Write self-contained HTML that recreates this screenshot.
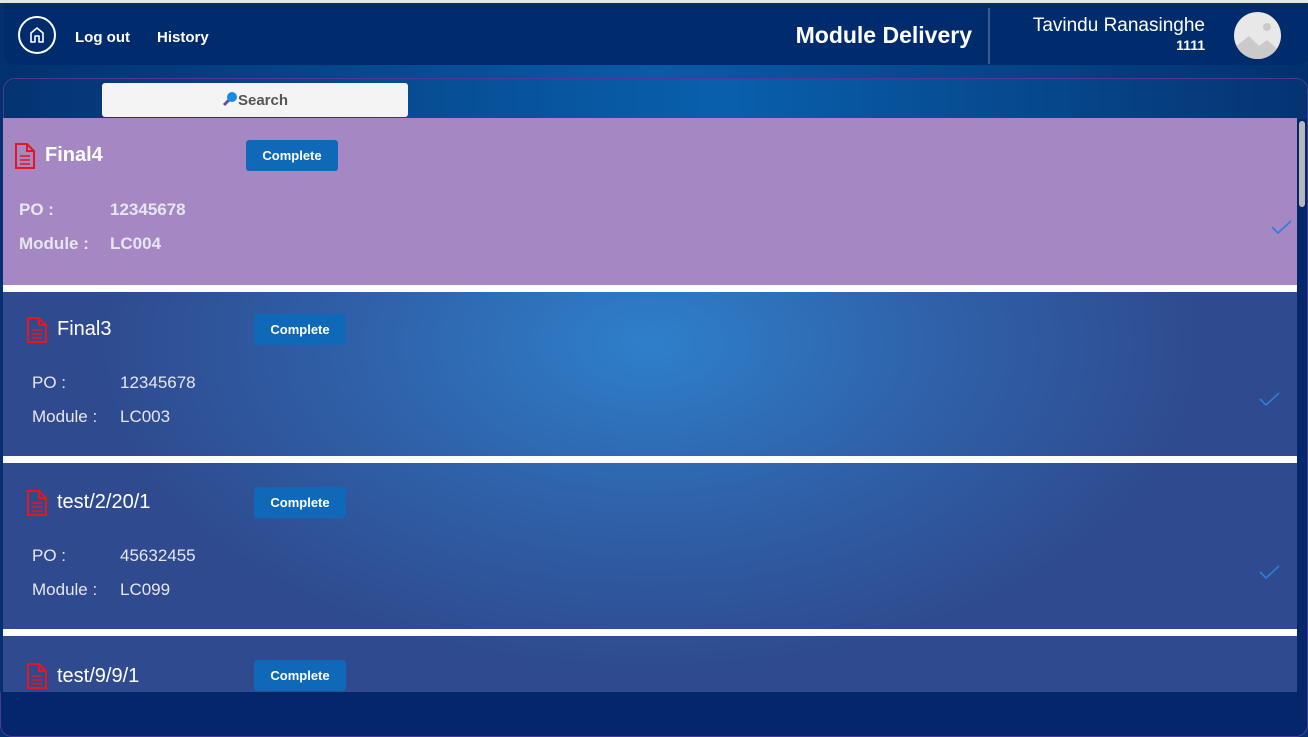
<!DOCTYPE html>
<html><head><meta charset="utf-8"><style>
*{margin:0;padding:0;box-sizing:border-box}
body{width:1308px;height:737px;overflow:hidden;font-family:"Liberation Sans",sans-serif;
background:radial-gradient(ellipse 700px 420px at 650px 340px,#2f7dc8 0%,#2c5aa6 45%,#24438a 80%,#1f3a80 100%);position:relative}
.top{position:absolute;left:0;top:0;width:1308px;height:3px;background:#e6e6e6}
.hdr{position:absolute;left:4px;top:3px;width:1304px;height:62px;background:#002c6e;border-radius:0 0 10px 10px}
.bgl{position:absolute;left:0;top:3px;width:1308px;height:734px;background:linear-gradient(90deg,#03306e,#0a5aa8 50%,#03306e);z-index:-1}
.home{position:absolute;left:18px;top:16px;width:38px;height:38px;border:2px solid #fff;border-radius:50%}
.nav{position:absolute;top:29px;color:#fff;font-weight:bold;font-size:15px}
.title{position:absolute;right:336px;top:22px;color:#fff;font-weight:bold;font-size:23px}
.sep{position:absolute;left:988px;top:8px;width:2px;height:56px;background:#3a5a92}
.name{position:absolute;right:103px;top:15px;color:#fff;font-size:19px;text-align:right;line-height:22px}
.name b{font-size:14px;display:block;line-height:16px}
.av{position:absolute;left:1234px;top:12px;width:47px;height:47px;border-radius:50%;background:#e8e8e8;overflow:hidden}
.cont{position:absolute;left:3px;top:78px;width:1305px;height:659px;border:1px solid #4b3b96;border-radius:12px;background:#04266a;overflow:hidden}
.cont .strip{position:absolute;left:0;top:0;width:1305px;height:40px;background:linear-gradient(90deg,#053372,#0860ac 55%,#053372)}
.search{position:absolute;left:102px;top:83px;width:306px;height:34px;background:#f4f4f4;border-radius:3px;color:#555;font-size:15px;font-weight:bold;text-align:center;line-height:35px}
.gal{position:absolute;left:3px;top:118px;width:1294px;height:575px;overflow:hidden;
background:radial-gradient(ellipse 560px 330px at 647px 225px,#2f7fca 0%,#2f62aa 50%,#2f4a8e 100%)}
.row{position:absolute;left:0;width:1294px}
.wl{position:absolute;left:0;width:1294px;height:7px;background:#fff}
.ic{position:absolute;width:22px;height:28px}
.nm{position:absolute;color:#fff;font-size:20px}
.btn{position:absolute;width:92px;height:31px;background:#0f68b8;border-radius:3px;color:#fff;font-weight:bold;font-size:13px;text-align:center;line-height:31px}
.lb{position:absolute;color:#e6e6f0;font-size:17px}
.chk{position:absolute;width:22px;height:16px}
.sb{position:absolute;left:1299px;top:121px;width:6px;height:86px;background:#b8b8b8;border-radius:3px}
</style></head><body>
<div class="bgl"></div>
<div class="top"></div>
<div class="hdr"></div>
<div class="home"><svg width="34" height="34" viewBox="0 0 34 34"><path d="M11 24V15l6-5 6 5v9h-4v-6h-4v6z" fill="none" stroke="#fff" stroke-width="1.6" stroke-linejoin="round"/></svg></div>
<div class="nav" style="left:75px">Log out</div>
<div class="nav" style="left:157px">History</div>
<div class="title">Module Delivery</div>
<div class="sep"></div>
<div class="name">Tavindu Ranasinghe<b>1111</b></div>
<div class="av"><svg width="47" height="47"><polygon points="0,36 15,24 25,34 33,28 47,40 47,47 0,47" fill="#cacaca"/><circle cx="33" cy="15" r="4" fill="#cacaca"/></svg></div>
<div class="cont"><div class="strip"></div></div>
<div class="search"><svg width="16" height="16" viewBox="0 0 16 16" style="vertical-align:-2px"><line x1="2" y1="14" x2="7" y2="9" stroke="#6a4aa0" stroke-width="3"/><circle cx="10" cy="6" r="5" fill="#1a8ae0"/></svg>Search</div>
<div class="gal">
 <div class="row" style="top:0;height:167px;background:#a587c4"></div>
 <div class="wl" style="top:167px"></div>
 <div class="wl" style="top:338px"></div>
 <div class="wl" style="top:511px"></div>
</div>
<div class="sb"></div>
<svg class="ic" style="left:14px;top:142px" viewBox="0 0 22 28"><path d="M2 2h11l7 7v17H2z M13 2v7h7" fill="none" stroke="#e8141e" stroke-width="2"/><path d="M6 14h10M6 18h10M6 22h10" stroke="#e8141e" stroke-width="1.6"/></svg>
<div class="nm" style="left:45px;top:144px;font-weight:bold">Final4</div>
<div class="btn" style="left:246px;top:140px">Complete</div>
<div class="lb" style="left:19px;top:200px;font-weight:bold">PO :</div>
<div class="lb" style="left:110px;top:200px;font-weight:bold">12345678</div>
<div class="lb" style="left:19px;top:234px;font-weight:bold">Module :</div>
<div class="lb" style="left:110px;top:234px;font-weight:bold">LC004</div>
<svg class="chk" style="left:1271px;top:219px"><path d="M1 8l6 6 13-12" fill="none" stroke="#2c7fd8" stroke-width="1.6"/></svg>

<svg class="ic" style="left:26px;top:316px" viewBox="0 0 22 28"><path d="M2 2h11l7 7v17H2z M13 2v7h7" fill="none" stroke="#e8141e" stroke-width="2"/><path d="M6 14h10M6 18h10M6 22h10" stroke="#e8141e" stroke-width="1.6"/></svg>
<div class="nm" style="left:57px;top:318px">Final3</div>
<div class="btn" style="left:254px;top:314px">Complete</div>
<div class="lb" style="left:32px;top:373px">PO :</div>
<div class="lb" style="left:120px;top:373px">12345678</div>
<div class="lb" style="left:32px;top:407px">Module :</div>
<div class="lb" style="left:120px;top:407px">LC003</div>
<svg class="chk" style="left:1259px;top:391px"><path d="M1 8l6 6 13-12" fill="none" stroke="#2c7fd8" stroke-width="1.6"/></svg>

<svg class="ic" style="left:26px;top:489px" viewBox="0 0 22 28"><path d="M2 2h11l7 7v17H2z M13 2v7h7" fill="none" stroke="#e8141e" stroke-width="2"/><path d="M6 14h10M6 18h10M6 22h10" stroke="#e8141e" stroke-width="1.6"/></svg>
<div class="nm" style="left:57px;top:491px">test/2/20/1</div>
<div class="btn" style="left:254px;top:487px">Complete</div>
<div class="lb" style="left:32px;top:546px">PO :</div>
<div class="lb" style="left:120px;top:546px">45632455</div>
<div class="lb" style="left:32px;top:580px">Module :</div>
<div class="lb" style="left:120px;top:580px">LC099</div>
<svg class="chk" style="left:1259px;top:564px"><path d="M1 8l6 6 13-12" fill="none" stroke="#2c7fd8" stroke-width="1.6"/></svg>

<svg class="ic" style="left:26px;top:662px" viewBox="0 0 22 28"><path d="M2 2h11l7 7v17H2z M13 2v7h7" fill="none" stroke="#e8141e" stroke-width="2"/><path d="M6 14h10M6 18h10M6 22h10" stroke="#e8141e" stroke-width="1.6"/></svg>
<div class="nm" style="left:57px;top:665px">test/9/9/1</div>
<div class="btn" style="left:254px;top:660px">Complete</div>
<div style="position:absolute;left:0;top:692px;width:1308px;height:45px;border:1px solid #4b3b96;border-top:none;border-radius:0 0 12px 12px;background:#04266a"></div>
</body></html>
